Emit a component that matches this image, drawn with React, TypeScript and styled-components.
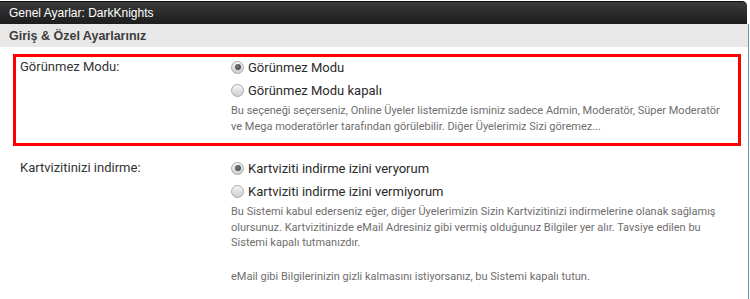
import React from "react";
import styled, { createGlobalStyle } from "styled-components";

const GlobalStyle = createGlobalStyle`
  body {
    margin: 0;
    background: #ffffff;
    font-family: Roboto, "Liberation Sans", sans-serif;
  }
`;

/* ---------------------------------------- */
/* Panel */
/* ---------------------------------------- */
const PanelStyled = styled.div`
  width: 749px;
  padding-top: 1px;
`;

const PanelHeaderStyled = styled.div`
  width: 747px;
  height: 23px;
  box-sizing: border-box;
  padding-left: 9px;
  display: flex;
  align-items: center;
  background: linear-gradient(#3b3b3b, #1c1c1c);
  border-top: 1px solid #0c0c0c;
  border-top-right-radius: 5px;
  color: #ffffff;
  font-family: "Liberation Sans", Arial, sans-serif;
  font-size: 12px;
`;

const PanelBodyStyled = styled.div`
  border-right: 1px solid #6f90aa;
  padding-bottom: 4px;
`;

const SectionTitleStyled = styled.div`
  width: 748px;
  height: 23px;
  box-sizing: border-box;
  padding-left: 9px;
  display: flex;
  align-items: center;
  background: #e8e8e8;
  color: #3c3c3c;
  font-family: "Liberation Sans", Arial, sans-serif;
  font-weight: bold;
  font-size: 12.5px;
`;

/* ---------------------------------------- */
/* Setting row */
/* ---------------------------------------- */
const SettingRowStyled = styled.div<{ $highlight?: boolean }>`
  margin: ${(p) => (p.$highlight ? "7px" : "9px")} 7px 0 13px;
  border: 3px solid ${(p) => (p.$highlight ? "#ff0000" : "transparent")};
  padding: 0 0 9px 4px;
  display: grid;
  grid-template-columns: 211px 1fr;
`;

const SettingLabelStyled = styled.div`
  height: 20px;
  line-height: 20px;
  color: #333333;
  font-size: 13px;
`;

const OptionsStyled = styled.div`
  display: flex;
  flex-direction: column;
  gap: 3px;
`;

const OptionStyled = styled.label`
  height: 20px;
  display: flex;
  align-items: center;
  gap: 4px;
  color: #2a2a2a;
  font-size: 13px;
`;

const RadioStyled = styled.span<{ $checked?: boolean }>`
  width: 13px;
  height: 13px;
  box-sizing: border-box;
  border-radius: 50%;
  border: 1px solid #a9a9a9;
  background: linear-gradient(#f6f6f6, #cdcdcd);
  display: flex;
  align-items: center;
  justify-content: center;
  &::after {
    content: "";
    display: ${(p) => (p.$checked ? "block" : "none")};
    width: 6px;
    height: 6px;
    border-radius: 50%;
    background: radial-gradient(circle at 40% 40%, #7a7a7a, #3a3a3a);
  }
`;

const HelpTextStyled = styled.p<{ $spaced?: boolean }>`
  margin: ${(p) => (p.$spaced ? "18px" : "3px")} 0 0;
  color: #6e6e6e;
  font-size: 11px;
  line-height: 15.5px;
`;

type Option = { text: string; checked?: boolean };

const SettingRow: React.FC<{
  label: string;
  options: Option[];
  highlight?: boolean;
  children?: React.ReactNode;
}> = ({ label, options, highlight, children }) => (
  <SettingRowStyled $highlight={highlight}>
    <SettingLabelStyled>{label}</SettingLabelStyled>
    <div>
      <OptionsStyled>
        {options.map((o) => (
          <OptionStyled key={o.text}>
            <RadioStyled $checked={o.checked} />
            {o.text}
          </OptionStyled>
        ))}
      </OptionsStyled>
      {children}
    </div>
  </SettingRowStyled>
);

export default function App() {
  return (
    <>
      <GlobalStyle />
      <PanelStyled>
        <PanelHeaderStyled>Genel Ayarlar: DarkKnights</PanelHeaderStyled>
        <PanelBodyStyled>
          <SectionTitleStyled>Giriş &amp; Özel Ayarlarınız</SectionTitleStyled>

          <SettingRow
            highlight
            label="Görünmez Modu:"
            options={[
              { text: "Görünmez Modu", checked: true },
              { text: "Görünmez Modu kapalı" },
            ]}
          >
            <HelpTextStyled>
              Bu seçeneği seçerseniz, Online Üyeler listemizde isminiz sadece
              Admin, Moderatör, Süper Moderatör
              <br />
              ve Mega moderatörler tarafından görülebilir. Diğer Üyelerimiz Sizi
              göremez...
            </HelpTextStyled>
          </SettingRow>

          <SettingRow
            label="Kartvizitinizi indirme:"
            options={[
              { text: "Kartviziti indirme izini veryorum", checked: true },
              { text: "Kartviziti indirme izini vermiyorum" },
            ]}
          >
            <HelpTextStyled>
              Bu Sistemi kabul ederseniz eğer, diğer Üyelerimizin Sizin
              Kartvizitinizi indirmelerine olanak sağlamış
              <br />
              olursunuz. Kartvizitinizde eMail Adresiniz gibi vermiş olduğunuz
              Bilgiler yer alır. Tavsiye edilen bu
              <br />
              Sistemi kapalı tutmanızdır.
            </HelpTextStyled>
            <HelpTextStyled $spaced>
              eMail gibi Bilgilerinizin gizli kalmasını istiyorsanız, bu Sistemi
              kapalı tutun.
            </HelpTextStyled>
          </SettingRow>
        </PanelBodyStyled>
      </PanelStyled>
    </>
  );
}
